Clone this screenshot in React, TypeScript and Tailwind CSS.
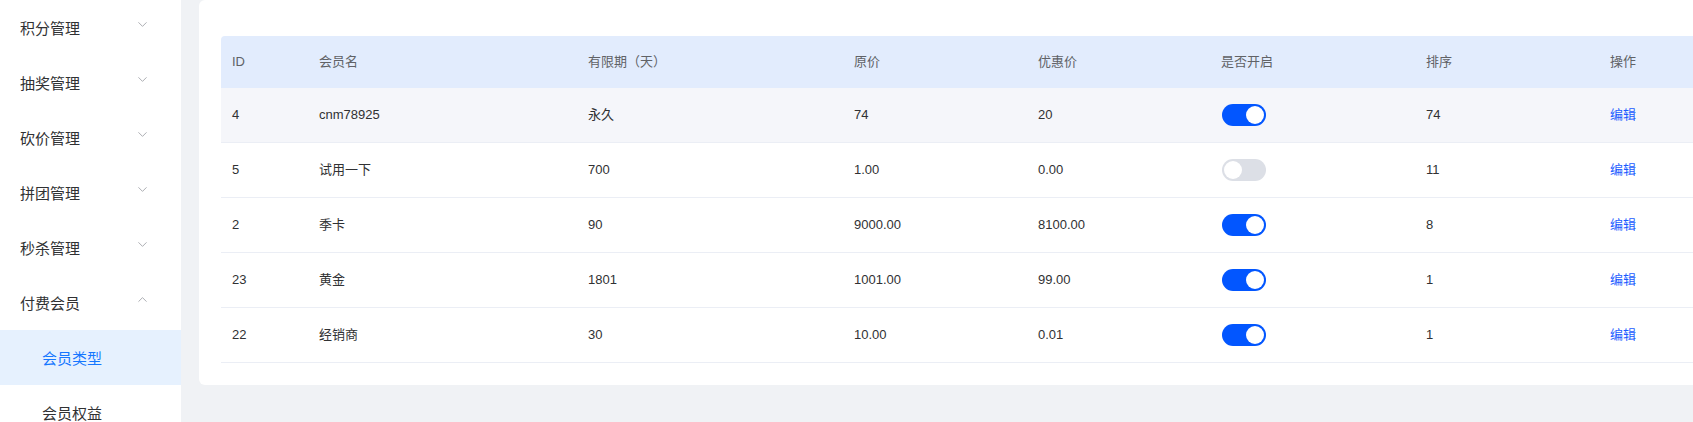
import { ChevronDown, ChevronUp } from 'lucide-react';

const font = { fontFamily: '"Liberation Sans", "Noto Sans CJK SC", sans-serif' };

type Row = { id: string; name: string; days: string; price: string; sale: string; on: boolean; sort: string };

const rows: Row[] = [
  { id: '4', name: 'cnm78925', days: '永久', price: '74', sale: '20', on: true, sort: '74' },
  { id: '5', name: '试用一下', days: '700', price: '1.00', sale: '0.00', on: false, sort: '11' },
  { id: '2', name: '季卡', days: '90', price: '9000.00', sale: '8100.00', on: true, sort: '8' },
  { id: '23', name: '黄金', days: '1801', price: '1001.00', sale: '99.00', on: true, sort: '1' },
  { id: '22', name: '经销商', days: '30', price: '10.00', sale: '0.01', on: true, sort: '1' },
];

const cols = 'grid grid-cols-[87px_269px_266px_184px_183px_205px_184px_130px]';

function Toggle({ on }: { on: boolean }) {
  return (
    <div
      className={`flex h-[22px] w-[44px] items-center rounded-full px-[2px] ${
        on ? 'justify-end bg-[#0256ff]' : 'justify-start bg-[#dcdfe6]'
      }`}
    >
      <div className="h-[18px] w-[18px] rounded-full bg-white" />
    </div>
  );
}

function MenuItem({ label, open }: { label: string; open?: boolean }) {
  return (
    <div className="flex h-[55px] items-center justify-between pl-5 pr-[31px] text-[15px] text-[#303133]">
      <span className="pt-[3px]">{label}</span>
      {open ? (
        <ChevronUp size={15} strokeWidth={1.2} className="-mt-[7px] text-[#909399]" />
      ) : (
        <ChevronDown size={15} strokeWidth={1.2} className="-mt-[7px] text-[#909399]" />
      )}
    </div>
  );
}

export default function App() {
  return (
    <div className="flex h-[422px] w-[1693px] overflow-hidden bg-[#f0f2f5]" style={font}>
      <aside className="w-[181px] shrink-0 bg-white">
        <MenuItem label="积分管理" />
        <MenuItem label="抽奖管理" />
        <MenuItem label="砍价管理" />
        <MenuItem label="拼团管理" />
        <MenuItem label="秒杀管理" />
        <MenuItem label="付费会员" open />
        <div className="flex h-[55px] items-center bg-[#e6f1fe] pl-[42px] pt-[3px] text-[15px] text-[#1677ff]">会员类型</div>
        <div className="flex h-[55px] items-center pl-[42px] pt-[3px] text-[15px] text-[#303133]">会员权益</div>
      </aside>

      <main className="min-w-0 flex-1 pl-[18px]">
        <div className="h-[385px] w-[1600px] rounded-md bg-white px-[22px] pt-[36px]">
          <div className={`${cols} h-[52px] items-center rounded-t-[4px] bg-[#e2ecfd] text-[13px] text-[#606266]`}>
            <div className="pl-[11px]">ID</div>
            <div className="pl-[11px]">会员名</div>
            <div className="pl-[11px]">有限期（天）</div>
            <div className="pl-[11px]">原价</div>
            <div className="pl-[11px]">优惠价</div>
            <div className="pl-[11px]">是否开启</div>
            <div className="pl-[11px]">排序</div>
            <div className="pl-[11px]">操作</div>
          </div>
          {rows.map((r, i) => (
            <div
              key={r.id}
              className={`${cols} h-[55px] items-center border-b border-[#ebeef5] text-[13px] text-[#303133] ${
                i === 0 ? 'bg-[#f5f6fa]' : 'bg-white'
              }`}
            >
              <div className="pl-[11px]">{r.id}</div>
              <div className="pl-[11px]">{r.name}</div>
              <div className="pl-[11px]">{r.days}</div>
              <div className="pl-[11px]">{r.price}</div>
              <div className="pl-[11px]">{r.sale}</div>
              <div className="pl-[12px]">
                <Toggle on={r.on} />
              </div>
              <div className="pl-[11px]">{r.sort}</div>
              <div className="pl-[11px] text-[#1a5cff]">编辑</div>
            </div>
          ))}
        </div>
      </main>
    </div>
  );
}
